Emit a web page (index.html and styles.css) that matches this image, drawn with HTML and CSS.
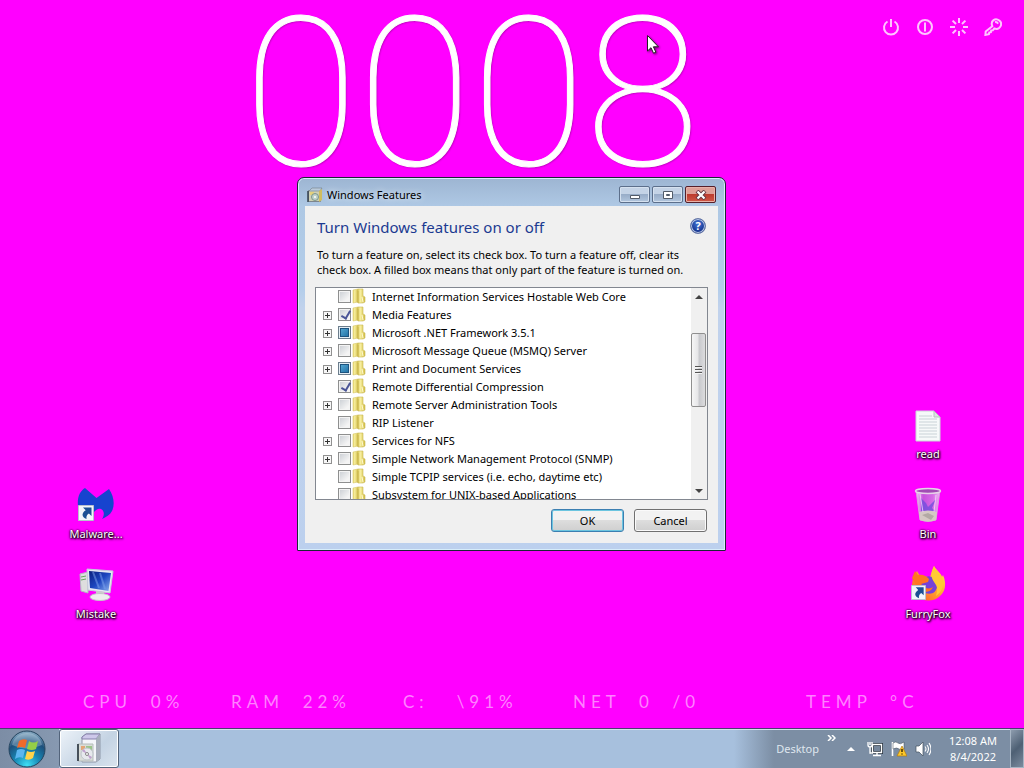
FILE: index.html
```html
<!DOCTYPE html>
<html lang="en">
<head>
<meta charset="utf-8">
<meta name="viewport" content="width=device-width, initial-scale=1">
<title>Windows Features</title>
<link rel="stylesheet" href="styles.css">
</head>
<body>
<svg class="sprites" aria-hidden="true">
  <defs>
    <linearGradient id="fold" x1="0" x2="1" y1="0" y2="0"><stop offset="0" stop-color="#e6d66c"/><stop offset=".35" stop-color="#f7ee9e"/><stop offset="1" stop-color="#d0bc45"/></linearGradient>
    <linearGradient id="screen" x1="0" x2="1" y1="0" y2="1"><stop offset="0" stop-color="#0a1f7c"/><stop offset=".5" stop-color="#1c46c0"/><stop offset="1" stop-color="#8fb4ee"/></linearGradient>
    <linearGradient id="fox" x1="1" x2="0" y1="0" y2="1"><stop offset="0" stop-color="#fff04a"/><stop offset=".5" stop-color="#ffa22e"/><stop offset="1" stop-color="#ff4a2a"/></linearGradient>
    <linearGradient id="glass" x1="0" x2="1" y1="0" y2="0"><stop offset="0" stop-color="#f4c4f6"/><stop offset=".3" stop-color="#c653dc"/><stop offset=".7" stop-color="#d66be6"/><stop offset="1" stop-color="#f0b8f4"/></linearGradient>
    <radialGradient id="orb" cx=".5" cy=".95" r=".9"><stop offset="0" stop-color="#3fe0f5"/><stop offset=".4" stop-color="#1787b4"/><stop offset=".75" stop-color="#1d4f7b"/><stop offset="1" stop-color="#7fa3bd"/></radialGradient>
    <symbol id="folder" viewBox="0 0 14 16"><path d="M1 2l5-1v13l-5 1z" fill="url(#fold)" stroke="#d9ca6c" stroke-width=".6"/><path d="M6 1h5v7l2 1v5l-2 1H6z" fill="url(#fold)" stroke="#cbb852" stroke-width=".6"/><path d="M6 3v12" stroke="#cbb64e"/><path d="M10 9l1 5" stroke="#fff9cf"/></symbol>
    <symbol id="shortcut" viewBox="0 0 16 16"><path d="M.5.5h15v15H.5z" fill="#f3f5fa" stroke="#b9c0ce"/><path d="M5 2.500h8.500V11l-2.600-2.600C8.800 9.800 8 11.500 8.600 14 4 12.500 2.800 8.500 7.700 5.200z" fill="#1c4f94"/></symbol>
  </defs>
</svg>

<main class="desktop">
  <time class="clock-gadget">0008</time>

  <nav class="power" aria-label="Power">
    <button aria-label="Shut down"><svg viewBox="0 0 18 18"><path d="M5.500 3.500a7 7 0 1 0 7 0M9 1v8"/></svg></button>
    <button aria-label="Sleep"><svg viewBox="0 0 18 18"><circle cx="9" cy="9" r="7"/><path d="M9 4.500v9"/></svg></button>
    <button aria-label="Restart"><svg viewBox="0 0 18 18"><path d="M9 0v5M9 13v5M0 9h5M13 9h5M2.600 2.600l3.400 3.400M12 12l3.400 3.400M2.600 15.400L6 12M12 6l3.400-3.400"/></svg></button>
    <button aria-label="Lock"><svg viewBox="0 0 18 18"><path d="M8.300 8.200C6 2.500 11.500-.5 15.300 2.500s1 10-5 8l-1.500 1.800-1.600.1-.3 1.800-1.600.2-.4 1.700-3.500.8.300-3.300z"/><path d="M11 4.200q2-.6 3 1.500"/></svg></button>
  </nav>

  <a class="shortcut malware" href="#"><svg viewBox="0 0 40 40"><path d="M2 21C1 12 4 6 9 3l11.500 10L33 4c5 7 6 16 3 22-2 4-6 6-10 8 3-4 2-9-1-10-3-1-5 1-7 3v9H6z" fill="#1744cf"/><use href="#shortcut" x="2" y="20" width="16" height="16"/></svg><span>Malware...</span></a>
  <a class="shortcut mistake" href="#"><svg viewBox="0 0 40 40"><path d="M4 9l8-2v21l-7-2z" fill="#dedede" stroke="#b5b8c2"/><path d="M5 12l5-1M5 15l5-1" stroke="#66a85f"/><path d="M11 4l26 2-3 22-22-3z" fill="#e6e8f2" stroke="#c4c8da"/><path d="M13 6l22 2-2.500 18L14 23z" fill="url(#screen)"/><path d="M17 7l6 16M24 8l5 16" stroke="#7ea4ed" stroke-width="2" opacity=".5"/><path d="M20 26l8 1v4h-8z" fill="#ccc"/><ellipse cx="24" cy="32" rx="10" ry="3.500" fill="#eee" stroke="#c4c4ca"/></svg><span>Mistake</span></a>
  <a class="shortcut read" href="#"><svg viewBox="0 0 40 40"><path d="M8 6h18l6 6v24H8z" fill="#f6f9f9" stroke="#cbd4d8"/><path d="M26 6v6h6z" fill="#dce6e2" stroke="#b4c4c0"/><path d="M11 11h13M11 14h18M11 17h18M11 20h18M11 23h18M11 26h18M11 29h18M11 32h18" stroke="#c9d2d7"/></svg><span>read</span></a>
  <a class="shortcut bin" href="#"><svg viewBox="0 0 40 40"><path d="M8 5h24l-4 30q-8 3-16 0z" fill="url(#glass)" stroke="#d9a0dc"/><path d="M13 13l5 5 2 4 8-8-4 9 3 3-8 4-6-4z" fill="#6b50de" opacity=".75"/><path d="M11 27q9-3 18 0l-1 8q-8 3-16 0z" fill="#d5c8c4"/><path d="M14 30l6-2 6 3-3 4z" fill="#b3a9a4"/><ellipse cx="20" cy="6" rx="12.500" ry="2.500" fill="#a24db4" stroke="#e7d1e8" stroke-width="1.500"/><path d="M12 9l3 18M28 10l-2 17" stroke="#f7d6fa" opacity=".8"/></svg><span>Bin</span></a>
  <a class="shortcut fox" href="#"><svg viewBox="0 0 40 40"><path d="M26 1c2 4 6 6 8 11l1-2c4 9 2 17-3 21-6 6-17 6-24 0-5-5-5-13-2-19l3-6 3 5 10 1z" fill="url(#fox)"/><path d="M13 14q7-5 13-1c5 4 4 12-1 15-6 2-12-1-12-6z" fill="#7542d8"/><path d="M4 13l3-7 3 4c5-1 8 1 11 4l-1 3-7 2 4 3q3 3 8 0c-3 7-12 6-16 0z" fill="#ff7422"/><path d="M26 1c2 4 6 6 8 11 3 8 0 15-6 19 1-4 2-7 0-11-4-6-7-10-2-19z" fill="#ffc935"/><use href="#shortcut" x="3" y="20" width="15" height="15"/></svg><span>FurryFox</span></a>

  <section class="window" aria-labelledby="title">
    <header class="titlebar">
      <svg class="app" viewBox="0 0 16 16"><path d="M1.500 3.500h12v11h-12z" fill="#cfd0b4" stroke="#7d858d"/><path d="M1 4v11" stroke="#39434e" stroke-width="1.500"/><path d="M2 4l3-3h10l-2 3z" fill="#b9cadb" stroke="#737d87" stroke-width=".6"/><path d="M12 4l3-2v11l-3 2z" fill="#d0bd5e"/><path d="M3 5h4v3H3z" fill="#e5d27c"/><circle cx="8" cy="10" r="3.500" fill="#bfd2c8" stroke="#7c958c"/><circle cx="8" cy="10" r="1" fill="#fff"/></svg>
      <h1 id="title">Windows Features</h1>
      <div class="caption">
        <button aria-label="Minimize"><svg viewBox="0 0 12 10"><path d="M1.500 5.500h9v3h-9z" fill="#fff" stroke="#525c6a"/></svg></button>
        <button aria-label="Maximize"><svg viewBox="0 0 12 10"><path d="M1.500 1.500h9v7h-9z" fill="#fff" stroke="#525c6a"/><path d="M4.500 4.500h3v1h-3z" fill="#9eb2cb" stroke="#525c6a"/></svg></button>
        <button class="close" aria-label="Close"><svg viewBox="0 0 12 10"><path d="M2 1l8 8M10 1L2 9" stroke="#653842" stroke-width="4"/><path d="M2.500 1.500l7 7M9.500 1.500l-7 7" stroke="#fff" stroke-width="2.200"/></svg></button>
      </div>
    </header>
    <div class="client">
      <div class="heading">
        <h2>Turn Windows features on or off</h2>
        <button class="help" aria-label="Help"><span>?</span></button>
      </div>
      <p>To turn a feature on, select its check box. To turn a feature off, clear its check box. A filled box means that only part of the feature is turned on.</p>
      <div class="tree">
        <ul>
          <li><i></i><label><input type="checkbox"><svg><use href="#folder"/></svg><span>Internet Information Services Hostable Web Core</span></label></li>
          <li><button class="expand" aria-label="Expand"></button><label><input type="checkbox" checked><svg><use href="#folder"/></svg><span>Media Features</span></label></li>
          <li><button class="expand" aria-label="Expand"></button><label><input class="partial" type="checkbox" aria-checked="mixed"><svg><use href="#folder"/></svg><span>Microsoft .NET Framework 3.5.1</span></label></li>
          <li><button class="expand" aria-label="Expand"></button><label><input type="checkbox"><svg><use href="#folder"/></svg><span>Microsoft Message Queue (MSMQ) Server</span></label></li>
          <li><button class="expand" aria-label="Expand"></button><label><input class="partial" type="checkbox" aria-checked="mixed"><svg><use href="#folder"/></svg><span>Print and Document Services</span></label></li>
          <li><i></i><label><input type="checkbox" checked><svg><use href="#folder"/></svg><span>Remote Differential Compression</span></label></li>
          <li><button class="expand" aria-label="Expand"></button><label><input type="checkbox"><svg><use href="#folder"/></svg><span>Remote Server Administration Tools</span></label></li>
          <li><i></i><label><input type="checkbox"><svg><use href="#folder"/></svg><span>RIP Listener</span></label></li>
          <li><button class="expand" aria-label="Expand"></button><label><input type="checkbox"><svg><use href="#folder"/></svg><span>Services for NFS</span></label></li>
          <li><button class="expand" aria-label="Expand"></button><label><input type="checkbox"><svg><use href="#folder"/></svg><span>Simple Network Management Protocol (SNMP)</span></label></li>
          <li><i></i><label><input type="checkbox"><svg><use href="#folder"/></svg><span>Simple TCPIP services (i.e. echo, daytime etc)</span></label></li>
          <li><i></i><label><input type="checkbox"><svg><use href="#folder"/></svg><span>Subsystem for UNIX-based Applications</span></label></li>
        </ul>
        <div class="scroll">
          <button aria-label="Scroll up"><svg viewBox="0 0 8 4"><path d="M0 4l4-4 4 4z" fill="#444"/></svg></button>
          <div class="track"><div class="thumb"><b></b></div></div>
          <button aria-label="Scroll down"><svg viewBox="0 0 8 4"><path d="M0 0l4 4 4-4z" fill="#444"/></svg></button>
        </div>
      </div>
      <div class="actions"><button class="default">OK</button><button>Cancel</button></div>
    </div>
  </section>

  <svg class="cursor" viewBox="0 0 12 19" aria-hidden="true"><path d="M.5.5v15.500l3.500-3.300 2.500 5.500 2.400-1-2.500-5.400h5z" fill="#fff" stroke="#222"/></svg>

  <div class="stats">
    <span>CPU  0%</span><span>RAM  22%</span><span>C:   \91%</span><span>NET  0  /0</span><span>TEMP  °C</span>
  </div>
</main>

<footer class="taskbar">
  <div class="start"><button aria-label="Start"><svg viewBox="0 0 38 38"><circle cx="19" cy="19" r="18" fill="url(#orb)" stroke="#26455f"/><path d="M4 15Q19 22 34 15C31-1 7-1 4 15z" fill="#e5f3fa" opacity=".3"/><path d="M11 11q4-3 8-1l-2 8q-4-2-8 0z" fill="#ef6a2b"/><path d="M21 11q4 3 9 0l-2 8q-4 2-9 0z" fill="#95cf47"/><path d="M9 20q4-2 8 0l-2 8q-4-2-8 1z" fill="#5bb6f0"/><path d="M19 21q4 2 8 0l-2 7q-4 3-8 1z" fill="#ffd34a"/></svg></button></div>
  <button class="task" aria-label="Windows Features"><svg viewBox="0 0 32 32"><path d="M9 4l4-3h14v25l-4 3H9z" fill="#f4f5fa" stroke="#8e97a7"/><path d="M9 4l4-3h14l-4 5H9z" fill="#cec8ea" stroke="#8781ac"/><path d="M23 6l4-5v25l-4 3z" fill="#a7aebb"/><path d="M5 11h15v17H5z" fill="#d9ddd8" stroke="#b5bcbb"/><path d="M5 11v17" stroke="#46505a" stroke-width="2"/><path d="M8 13h4v4H8z" fill="#e3a577"/><path d="M13 13h6v4h-6z" fill="#9cc48b"/><circle cx="14" cy="21" r="6" fill="#e7e9ed" stroke="#c0c6cc"/><path d="M14 21l-5-3 2-2zM14 21l5 3-2 2z" fill="#c1a1ce"/><circle cx="14" cy="21" r="1.500" fill="#fff" stroke="#888"/></svg></button>
  <div class="tray">
    <span class="toolbar">Desktop</span>
    <button class="more" aria-label="More"><svg viewBox="0 0 9 6"><path d="M1 0l3 3-3 3M5 0l3 3-3 3" fill="none" stroke="#fff" stroke-width="1.500"/></svg></button>
    <button class="hidden-icons" aria-label="Show hidden icons"><svg viewBox="0 0 8 4"><path d="M0 4l4-4 4 4z" fill="#fff"/></svg></button>
    <div class="status">
      <svg viewBox="0 0 16 16"><path d="M5.500 3.500h9v8h-9z" fill="#75869b" stroke="#26313d" stroke-width="3"/><path d="M5.500 3.500h9v8h-9zM10 12v2M6 14.500h8" fill="none" stroke="#fff" stroke-width="1.400"/><path d="M1 1v3q0 2 2 2t2-2V1M3 1v3M3 6v6h3" fill="none" stroke="#fff" stroke-width="1.300"/></svg>
      <svg viewBox="0 0 16 16"><path d="M1.500 1v14" stroke="#fff" stroke-width="1.600"/><path d="M2 2q3-2 5 0t6-1v7q-3 2-5 0T2 8z" fill="#fff" stroke="#3b4652" stroke-width=".5"/><path d="M11 5l5 10H6z" fill="#ffc928" stroke="#ad7914" stroke-width=".7"/><path d="M11 8v3M11 12.500v1" stroke="#332200" stroke-width="1.400"/></svg>
      <svg viewBox="0 0 16 16"><path d="M1 5h3l4-4v14l-4-4H1z" fill="#fff" stroke="#44505e" stroke-width=".7"/><path d="M10 5.500q2 2.500 0 5M12 4q3 4 0 8M14 2q4 6 0 12" fill="none" stroke="#fff" stroke-width="1.100"/></svg>
    </div>
    <div class="time"><span>12:08 AM</span><span>8/4/2022</span></div>
    <button class="peek" aria-label="Show desktop"></button>
  </div>
</footer>
</body>
</html>
```
FILE: styles.css
```css
* { box-sizing: border-box; }
body {
  margin: 0;
  min-height: 100vh;
  display: flex;
  flex-direction: column;
  background: #ff00ff;
  color: #000;
  font: 11px/15px "Noto Sans", "Open Sans", sans-serif;
}
button { font: inherit; color: inherit; padding: 0; border: 0; background: none; }
svg { display: block; }
h1, h2, p, ul { margin: 0; padding: 0; font-weight: 400; }
.sprites { position: absolute; width: 0; height: 0; }
.desktop { position: relative; flex: 1; display: flex; flex-direction: column; overflow: hidden; }

.clock-gadget {
  position: absolute;
  left: 244px;
  top: 17px;
  color: #fff;
  font: 100 208px/154px Roboto, sans-serif;
  -webkit-text-stroke: 1px #fff;
  text-shadow: 1px 1px 2px #b000b0;
}
.power { display: flex; justify-content: flex-end; gap: 16px; padding: 18px 22px; }
.power svg { width: 18px; height: 18px; fill: none; stroke: #ffc4ff; stroke-width: 2; }

.shortcut {
  position: absolute;
  width: 80px;
  display: flex;
  flex-direction: column;
  align-items: center;
  gap: 1px;
  color: #fff;
  text-decoration: none;
  text-shadow: 1px 1px 2px #000, 0 1px 3px #000, 0 0 2px #000;
}
.shortcut svg { width: 40px; height: 40px; }
.malware { left: 56px; top: 485px; }
.mistake { left: 56px; top: 565px; }
.read { right: 56px; top: 405px; }
.bin { right: 56px; top: 485px; }
.fox { right: 56px; top: 565px; }

.stats {
  margin-top: auto;
  padding: 0 0 16px 83px;
  display: grid;
  grid-template-columns: 148fr 172fr 170fr 233fr 218fr;
  color: #ff80ff;
  font: 400 17px/20px Lato, sans-serif;
  letter-spacing: 5px;
  white-space: pre;
}

.window {
  position: absolute;
  left: 297px;
  top: 177px;
  width: 429px;
  padding: 0 7px 7px;
  border: 1px solid #1d2536;
  border-radius: 7px 7px 1px 1px;
  background: linear-gradient(#9db5d2, #aec8e4 28px, #b3cdea 110px, #c1d2ec 130px, #bcd0ee);
  box-shadow: inset 0 0 0 1px #d6ecfa;
}
.titlebar { display: flex; align-items: center; height: 28px; padding: 5px 2px 0; gap: 4px; }
.titlebar .app { width: 16px; height: 16px; }
.titlebar h1 { flex: 1; font-size: 11px; line-height: 16px; text-shadow: 0 0 6px #fff; }
.caption { display: flex; gap: 2px; }
.caption button {
  width: 31px;
  height: 17px;
  display: grid;
  place-items: center;
  border: 1px solid #5c6f8b;
  border-radius: 2px;
  background: linear-gradient(#c4d3e6 50%, #98adc8 50%, #b2c6de);
  box-shadow: inset 0 0 0 1px #d5e1ef;
}
.caption svg { width: 12px; height: 10px; }
.caption .close {
  border-color: #56202a;
  background: linear-gradient(#dda097 50%, #bd3c2e 50%, #cf5948);
  box-shadow: inset 0 0 0 1px #e8b2a8;
}
.client { padding: 11px 10px 11px 12px; background: #f0f0f0; }
.heading { display: flex; justify-content: space-between; align-items: flex-start; padding-right: 2px; }
.heading h2 { color: #1b3a91; font-size: 15px; line-height: 20px; }
.help {
  width: 16px;
  height: 16px;
  margin-top: 1px;
  border: 1px solid #6777a5;
  border-radius: 50%;
  background: radial-gradient(circle at 50% 35%, #4577d8, #173690 65%);
  box-shadow: inset 0 0 0 1px #b9c8e6;
  color: #fff;
  font-size: 11px;
  font-weight: 700;
  line-height: 14px;
}
.client p { margin: 10px 10px 10px 0; }
.tree {
  height: 213px;
  margin-left: -2px;
  display: flex;
  border: 1px solid #828790;
  background: #fff;
  overflow: hidden;
}
.tree ul { flex: 1; margin-top: -1px; list-style: none; }
.tree li { display: flex; align-items: center; gap: 6px; height: 18px; padding-left: 7px; }
.tree i { width: 9px; }
.expand {
  width: 9px;
  height: 9px;
  margin-top: 2px;
  border: 1px solid #919191;
  background:
    linear-gradient(#333, #333) center / 5px 1px no-repeat,
    linear-gradient(#333, #333) center / 1px 5px no-repeat,
    #f7f7f7;
}
.tree label { display: flex; align-items: center; }
.tree label svg { width: 14px; height: 16px; margin: 0 6px 0 1px; }
.tree input {
  appearance: none;
  width: 13px;
  height: 13px;
  margin: 0;
  border: 1px solid #8e8f8f;
  background: linear-gradient(135deg, #c9cdd3, #f4f4f4 75%);
  box-shadow: inset 0 0 0 1px #f4f4f4;
}
.tree input:checked::after {
  content: "";
  display: block;
  width: 4px;
  height: 8px;
  margin: 0 0 0 4px;
  border: solid #4a5597;
  border-width: 0 2px 2px 0;
  transform: rotate(30deg);
}
.tree input.partial {
  border-color: #6c7d8c;
  background: linear-gradient(135deg, #61b4dc, #14659c);
  box-shadow: inset 0 0 0 1px #e4eef4, inset 0 0 0 2px #1c5480;
}
.scroll { width: 16px; display: flex; flex-direction: column; background: #f0f0f0; }
.scroll button { height: 17px; display: grid; place-items: center; }
.scroll button svg { width: 8px; height: 4px; }
.track { flex: 1; padding-top: 28px; }
.thumb {
  width: 15px;
  height: 74px;
  display: grid;
  place-items: center;
  border: 1px solid #8f8f8f;
  border-radius: 2px;
  background: linear-gradient(90deg, #f6f6f6, #e6e6e8 45%, #c8c9cd 55%, #dcdcde);
}
.thumb b { width: 7px; height: 8px; background: repeating-linear-gradient(#555 0 1px, #f5f5f5 1px 2px, transparent 2px 3px); }
.actions { display: flex; justify-content: flex-end; gap: 10px; margin-top: 9px; padding-right: 1px; }
.actions button {
  width: 73px;
  height: 23px;
  border: 1px solid #707070;
  border-radius: 3px;
  background: linear-gradient(#f2f2f2 50%, #dddddd 50%, #cfcfcf);
  box-shadow: inset 0 0 0 1px #fafafa;
}
.actions .default { border-color: #3c7fb1; box-shadow: inset 0 0 0 1px #6cc5e0; }

.cursor { position: absolute; left: 647px; top: 35px; width: 12px; height: 19px; filter: drop-shadow(1px 1px 1px #700070); }

.taskbar {
  height: 40px;
  display: flex;
  border-top: 1px solid #4d3a74;
  background: linear-gradient(90deg, transparent calc(100% - 290px), #7c8ea4 calc(100% - 250px)), #a7c0dd;
  box-shadow: inset 0 1px 0 #d3dfea;
  color: #fff;
}
.start { width: 59px; padding: 1px 0 0 8px; background: linear-gradient(90deg, #7c8da5, #8799b1); }
.start svg { width: 38px; height: 38px; }
.task {
  width: 60px;
  display: grid;
  place-items: center;
  border: 1px solid #53647b;
  border-radius: 3px;
  background: linear-gradient(135deg, #edf3f9, #c4d3e3 60%, #dae4ee);
  box-shadow: inset 0 0 0 1px #fff;
}
.task svg { width: 32px; height: 32px; }
.tray { margin-left: auto; display: flex; align-items: center; }
.toolbar { color: #dfe6ee; font-size: 11px; }
.more { align-self: flex-start; margin: 6px 11px 0 8px; }
.more svg { width: 9px; height: 6px; }
.hidden-icons svg { width: 8px; height: 4px; }
.status { display: flex; gap: 8px; margin: 0 18px 0 12px; }
.status svg { width: 16px; height: 16px; }
.time { display: flex; flex-direction: column; align-items: center; font-size: 11px; line-height: 16px; }
.peek {
  align-self: stretch;
  width: 14px;
  margin-left: 13px;
  border: 1px solid #a7b5c4;
  background: linear-gradient(135deg, #8d9cae, #4e6074 50%, #7b8b9e);
}
```
